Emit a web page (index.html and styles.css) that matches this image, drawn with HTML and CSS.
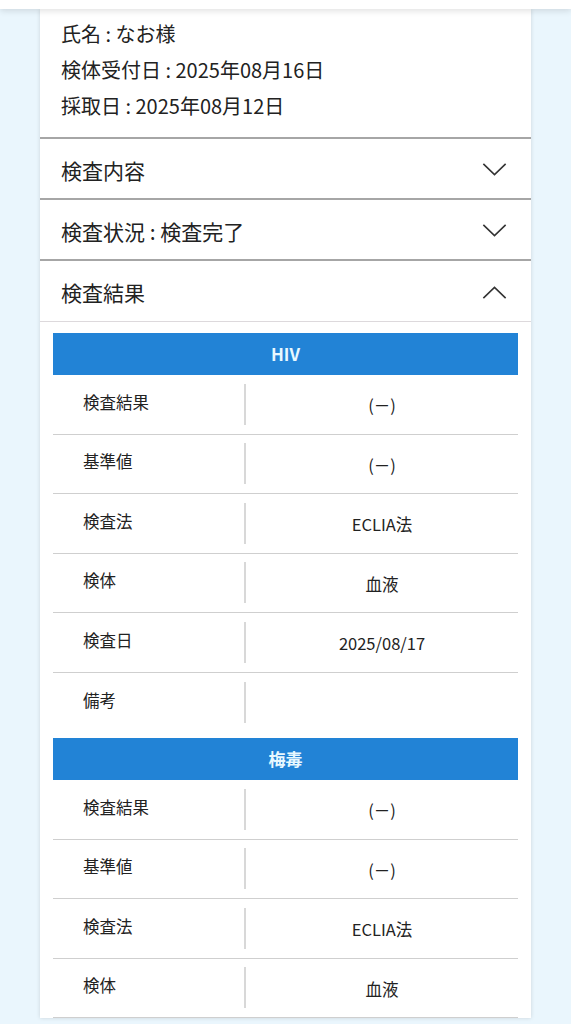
FILE: index.html
```html
<html>
  <head>
    <title>検査結果</title>
    <meta charset="UTF-8">
    <link rel="stylesheet" href="styles.css">
  </head>
  <body>
    <div class="topbar"></div>
    <div class="card">
      <div class="info">
        <p>氏名 : なお様</p>
        <p>検体受付日 : 2025年08月16日</p>
        <p>採取日 : 2025年08月12日</p>
      </div>

      <div class="acc">
        <span>検査内容</span>
        <svg class="chev" viewBox="0 0 26 14"><polyline points="1,1 13,12.5 25,1"/></svg>
      </div>
      <div class="acc">
        <span>検査状況 : 検査完了</span>
        <svg class="chev" viewBox="0 0 26 14"><polyline points="1,1 13,12.5 25,1"/></svg>
      </div>
      <div class="acc open">
        <span>検査結果</span>
        <svg class="chev" viewBox="0 0 26 14"><polyline points="1,13 13,1.5 25,13"/></svg>
      </div>

      <div class="results">
        <div class="group">
          <div class="ghead">HIV</div>
          <div class="row"><div class="lbl">検査結果</div><div class="val">(－)</div></div>
          <div class="row"><div class="lbl">基準値</div><div class="val">(－)</div></div>
          <div class="row"><div class="lbl">検査法</div><div class="val">ECLIA法</div></div>
          <div class="row"><div class="lbl">検体</div><div class="val">血液</div></div>
          <div class="row"><div class="lbl">検査日</div><div class="val">2025/08/17</div></div>
          <div class="row last"><div class="lbl">備考</div><div class="val"></div></div>
        </div>
        <div class="group">
          <div class="ghead">梅毒</div>
          <div class="row"><div class="lbl">検査結果</div><div class="val">(－)</div></div>
          <div class="row"><div class="lbl">基準値</div><div class="val">(－)</div></div>
          <div class="row"><div class="lbl">検査法</div><div class="val">ECLIA法</div></div>
          <div class="row"><div class="lbl">検体</div><div class="val">血液</div></div>
        </div>
      </div>
    </div>
  </body>
</html>
```

FILE: styles.css
```css
body {
  margin: 0;
  background: #eaf6fd;
  color: #222;
  font-family: "Noto Sans CJK JP", "Noto Sans", sans-serif;
  overflow: hidden;
}
.topbar {
  position: relative;
  z-index: 2;
  height: 9px;
  background: #fff;
  box-shadow: 0 2px 6px rgba(0,0,0,0.12);
}
.card {
  width: 491px;
  margin-left: 40px;
  background: #fff;
  box-shadow: 0 0 4px rgba(0,0,0,0.14);
}
.info {
  padding: 7px 21px 13px;
  border-bottom: 2px solid #a6a6a6;
}
.info p {
  margin: 0;
  font-size: 20px;
  line-height: 36px;
}
.acc {
  display: flex;
  align-items: center;
  justify-content: space-between;
  box-sizing: border-box;
  height: 61px;
  padding: 2px 24px 0 21px;
  font-size: 21px;
  border-bottom: 2px solid #a6a6a6;
}
.acc.open {
  border-bottom: 1px solid #ddd9dc;
}
.chev {
  width: 25px;
  height: 13px;
  fill: none;
  stroke: #333;
  stroke-width: 1.7;
}
.results {
  padding: 11px 13px 0;
}
.group {
  margin-bottom: 6px;
}
.ghead {
  height: 42px;
  line-height: 42px;
  background: #2283d6;
  color: #e8f8ff;
  text-align: center;
  font-weight: bold;
  font-size: 17px;
}
.row {
  display: flex;
  height: 59.5px;
  box-sizing: border-box;
  border-bottom: 1px solid #cfcfcf;
  align-items: center;
  font-size: 16.5px;
}
.row.last {
  border-bottom: none;
}
.lbl {
  width: 193px;
  box-sizing: border-box;
  padding: 0 0 5px 30px;
  height: 41px;
  display: flex;
  align-items: center;
  border-right: 2px solid #d8d8d8;
}
.val {
  flex: 1;
  text-align: center;
  padding-top: 2px;
}
```
